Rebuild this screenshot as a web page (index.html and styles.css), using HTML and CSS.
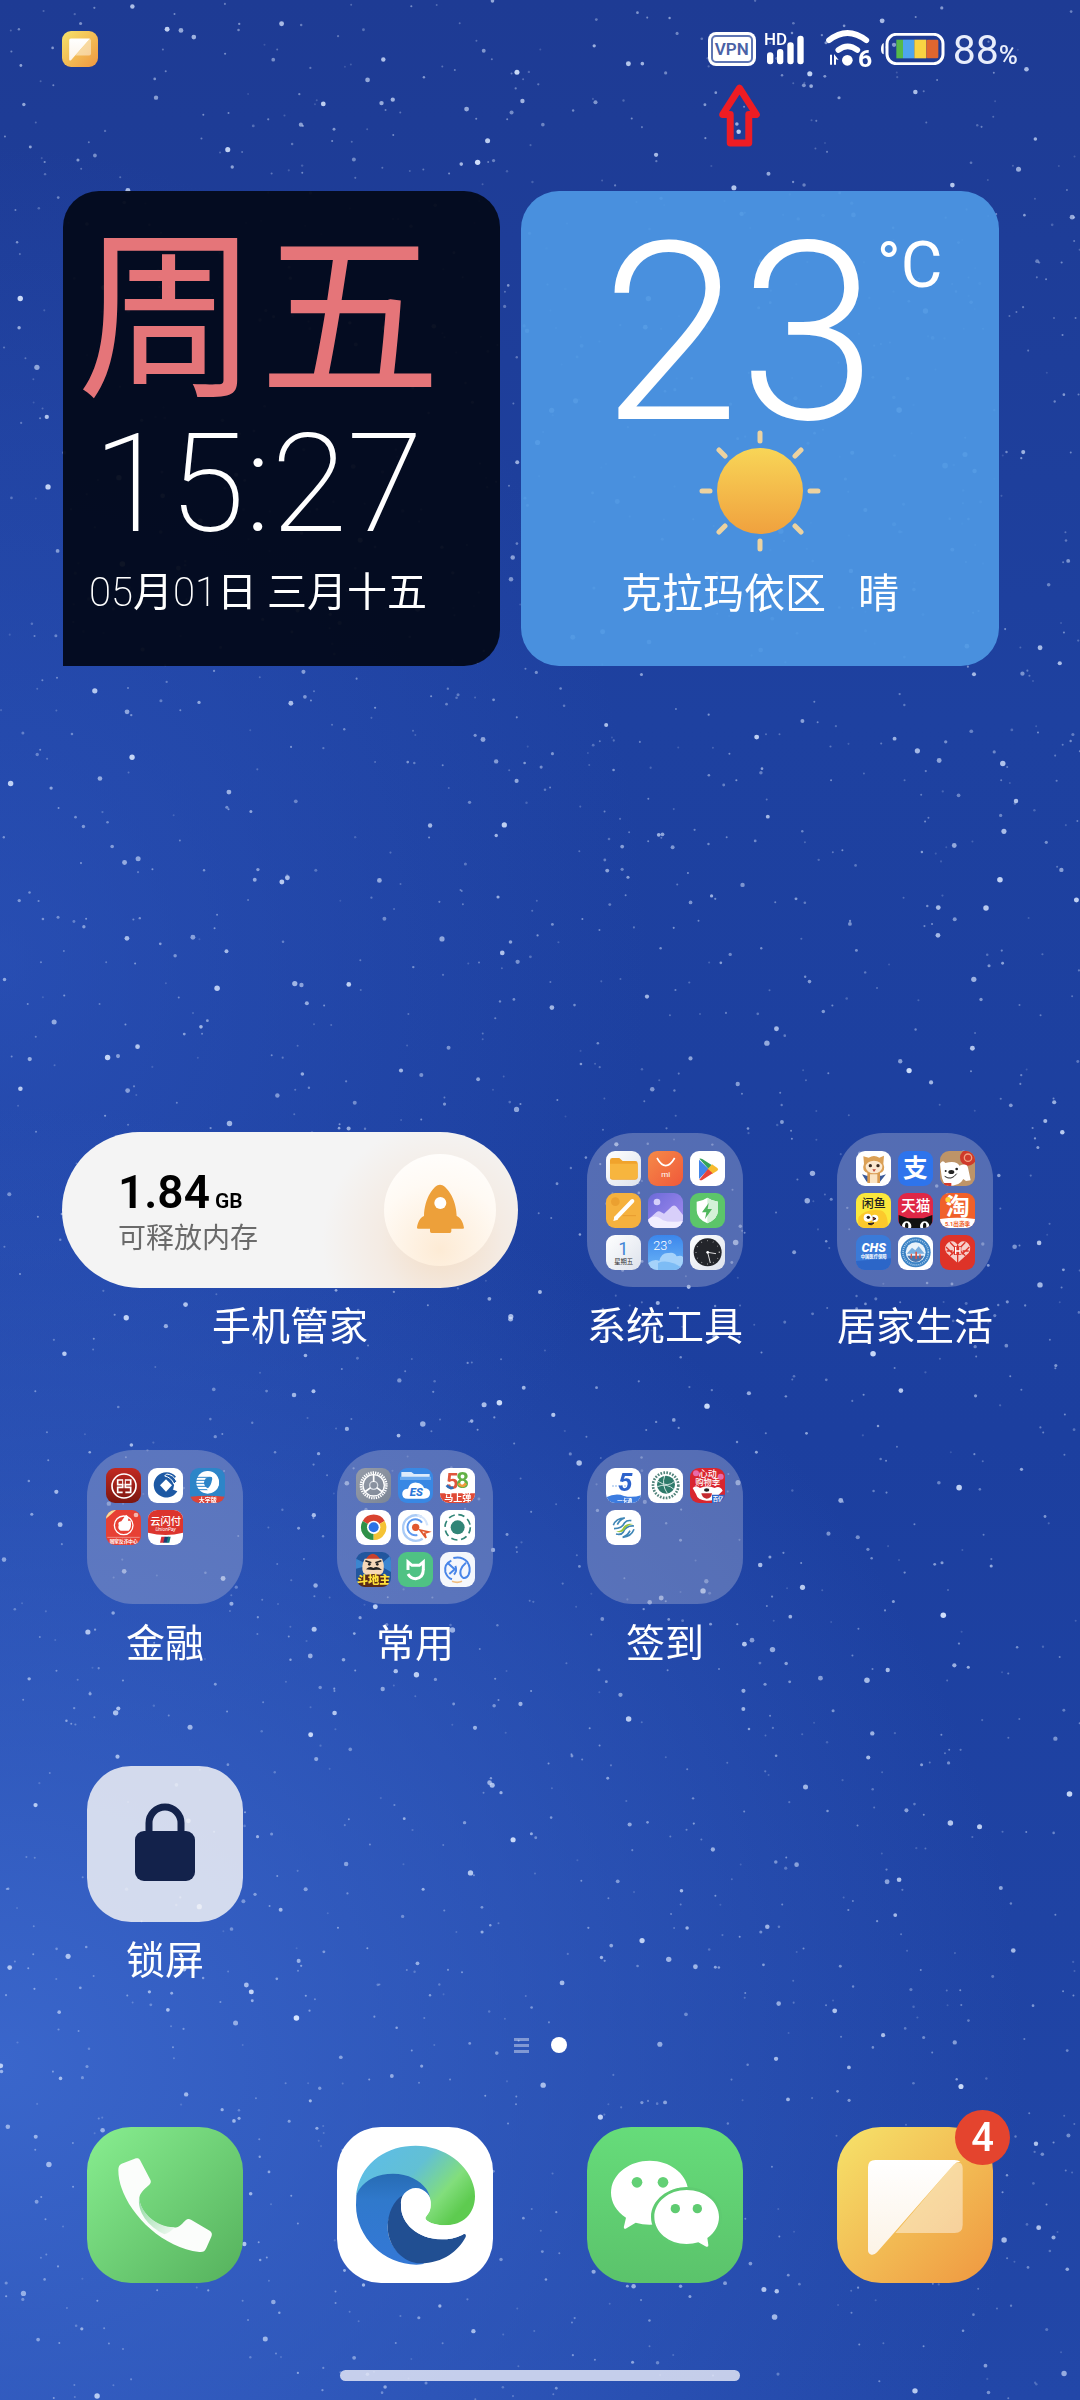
FILE: index.html
```html
<!DOCTYPE html>
<html lang="zh-CN">
<head>
    <meta charset="UTF-8">
    <meta name="viewport" content="width=device-width, initial-scale=1.0">
    <title>桌面</title>
    <link rel="stylesheet" href="styles.css">
    <script src="stars.js" defer></script>
</head>
<body>
    <svg class="defs" width="0" height="0" aria-hidden="true">
        <defs>
            <linearGradient id="gGreen" x1="0" y1="0" x2="1" y2="1"><stop offset="0" stop-color="#88ee90"/><stop offset="1" stop-color="#55b15c"/></linearGradient>
            <linearGradient id="gWechat" x1="0" y1="0" x2="0" y2="1"><stop offset="0" stop-color="#66dc7a"/><stop offset="1" stop-color="#5bc36b"/></linearGradient>
            <linearGradient id="gMsg" x1="0" y1="0" x2="1" y2="1"><stop offset="0" stop-color="#f6e36a"/><stop offset="1" stop-color="#ef9740"/></linearGradient>
            <linearGradient id="gPaper" x1="0" y1="0" x2="0" y2="1"><stop offset="0" stop-color="#ffffff"/><stop offset="1" stop-color="#fcf3e6"/></linearGradient>
            <linearGradient id="gSun" x1="0" y1="0" x2="0" y2="1"><stop offset="0" stop-color="#f8d557"/><stop offset="1" stop-color="#f0a13e"/></linearGradient>
            <linearGradient id="gEdgeTop" x1="0" y1="0" x2="1" y2=".6"><stop offset="0" stop-color="#5cbcec"/><stop offset=".5" stop-color="#62c0d4"/><stop offset=".8" stop-color="#82de7c"/><stop offset="1" stop-color="#5ecb50"/></linearGradient>
            <linearGradient id="gEdgeMid" x1="0" y1="0" x2="0" y2="1"><stop offset="0" stop-color="#276cb4"/><stop offset=".3" stop-color="#3079cc"/><stop offset="1" stop-color="#3478d6"/></linearGradient>
            <linearGradient id="gCrease" x1="0" y1="0" x2="1" y2="1"><stop offset="0" stop-color="#8ed9a0"/><stop offset="1" stop-color="#f2faf3"/></linearGradient>
            <linearGradient id="gPale" x1="0" y1="0" x2="1" y2="1"><stop offset="0" stop-color="#ffffff"/><stop offset="1" stop-color="#dde2ec"/></linearGradient>
            <linearGradient id="gOrange" x1="0" y1="0" x2="1" y2="1"><stop offset="0" stop-color="#f58a48"/><stop offset="1" stop-color="#f0583a"/></linearGradient>
            <linearGradient id="gPurple" x1="0" y1="0" x2="1" y2="1"><stop offset="0" stop-color="#6c6ad8"/><stop offset="1" stop-color="#a48cf0"/></linearGradient>
            <linearGradient id="gSky" x1="0" y1="0" x2="0" y2="1"><stop offset="0" stop-color="#3b86ec"/><stop offset="1" stop-color="#6bb5f7"/></linearGradient>
            <linearGradient id="gRed" x1="0" y1="0" x2="0" y2="1"><stop offset="0" stop-color="#c22920"/><stop offset="1" stop-color="#7c1610"/></linearGradient>
            <linearGradient id="gGray" x1="0" y1="0" x2="1" y2="1"><stop offset="0" stop-color="#969ca8"/><stop offset="1" stop-color="#7c8696"/></linearGradient>
            <symbol id="message" viewBox="0 0 468 468">
                <rect width="468" height="468" fill="url(#gMsg)"/>
                <path d="M175 318L352 110Q377 100 377 124V294Q377 318 353 318Z" fill="#fff" fill-opacity=".45"/>
                <path d="M93 121Q93 99 115 99H352Q364 99 370 104Q358 104 350 113L120 376Q112 385 103 383Q93 380 93 370Z" fill="url(#gPaper)"/>
            </symbol>
        </defs>
    </svg>

    <canvas class="stars" id="stars"></canvas>

    <div class="screen">
        <header class="status">
            <svg class="status-app"><use href="#message"/></svg>
            <div class="status-icons">
                <div class="vpn">
                    <span class="vpn-text">VPN</span>
                    <svg class="arrow" viewBox="0 0 124 190"><path d="M62 12L113 92H90V178H34V92H11Z" fill="none" stroke="#ee1c24" stroke-width="21" stroke-linejoin="round"/></svg>
                </div>
                <svg class="signal" viewBox="0 0 126 96">
                    <text x="0" y="36" font-size="51" font-weight="500" fill="#fff">HD</text>
                    <g fill="#fff"><rect x="9" y="58" width="19" height="36" rx="9"/><rect x="39" y="48" width="19" height="46" rx="9"/><rect x="70" y="28" width="19" height="66" rx="9"/><rect x="100" y="8" width="19" height="86" rx="9"/></g>
                </svg>
                <svg class="wifi" viewBox="0 0 141 114">
                    <g fill="none" stroke="#fff" stroke-width="17" stroke-linecap="round"><path d="M9 31Q64 -13 121 31"/><path d="M37 60Q65 38 94 60"/></g>
                    <circle cx="64" cy="91" r="16" fill="#fff"/>
                    <path d="M0 86L12 104V74H18V104H12M24 104V72L38 90L30 88V104Z" fill="#fff"/>
                    <text x="96" y="111" font-size="74" font-weight="700" fill="#fff">6</text>
                </svg>
                <svg class="battery" viewBox="0 0 192 96">
                    <path d="M8 30Q0 34 0 48Q0 62 8 64Z" fill="#fff"/>
                    <rect x="18" y="4" width="168" height="88" rx="28" fill="none" stroke="#fff" stroke-width="9"/>
                    <rect x="46" y="20" width="20" height="56" fill="#56b949"/><rect x="66" y="20" width="34" height="56" fill="#4ea5ee"/>
                    <rect x="100" y="20" width="36" height="56" fill="#f9d342"/><rect x="136" y="20" width="36" height="56" rx="4" fill="#e0662f"/>
                </svg>
                <span class="percent">88<small>%</small></span>
            </div>
        </header>

        <section class="widgets">
            <div class="clock">
                <div class="weekday">周五</div>
                <div class="time">15:27</div>
                <div class="date"><span class="num">05</span>月<span class="num">01</span>日 三月十五</div>
            </div>
            <div class="weather">
                <div class="temp">23<sup>°C</sup></div>
                <svg class="sun" viewBox="0 0 122 122">
                    <g stroke="#ecd2a0" stroke-width="5" stroke-linecap="round">
                        <path d="M61 3V11M61 111V119M3 61H11M111 61H119M20 20L26 26M96 96L102 102M20 102L26 96M96 26L102 20"/>
                    </g>
                    <circle cx="61" cy="61" r="43" fill="url(#gSun)"/>
                </svg>
                <div class="place"><span>克拉玛依区</span><span>晴</span></div>
            </div>
        </section>

        <main class="apps">
            <button class="app app-wide">
                <span class="manager">
                    <span class="memory">
                        <span class="memory-size">1.84<small>GB</small></span>
                        <span class="memory-text">可释放内存</span>
                    </span>
                    <svg class="rocket" viewBox="0 0 336 336">
                        <path d="M168 92C186 92 217 132 218 186C230 190 238 206 240 222Q240 224 236 224H202V232Q202 237 197 237H143Q138 237 138 232V224H103Q99 224 99 221C101 206 108 190 120 186C121 132 150 92 168 92Z" fill="#eda03a"/>
                        <circle cx="169" cy="147" r="18" fill="#fff"/>
                    </svg>
                </span>
                <span class="label">手机管家</span>
            </button>

            <button class="app">
                <span class="folder">
                    <svg viewBox="0 0 105 105"><rect width="105" height="105" fill="url(#gPale)"/><path d="M12 28Q12 21 19 21H40L50 30H88Q95 30 95 37V78Q95 86 87 86H20Q12 86 12 78Z" fill="#f0a32c"/><path d="M12 38H95V78Q95 84 87 84H20Q12 84 12 78Z" fill="#f7b53e"/></svg>
                    <svg viewBox="0 0 105 105"><rect width="105" height="105" fill="url(#gOrange)"/><path d="M27 21Q53 67 80 21" fill="none" stroke="#fff" stroke-width="5"/><text x="53" y="78" font-size="24" text-anchor="middle" fill="#fff">mi</text></svg>
                    <svg viewBox="0 0 105 105"><rect width="105" height="105" fill="#fff"/><path d="M27 26L56 54L27 84Z" fill="#4285e8"/><path d="M28 23Q32 21 38 25L66 43L56 54Z" fill="#35a35a"/><path d="M66 40L82 51Q87 55 82 59L66 69L53 54Z" fill="#f7bb2e"/><path d="M28 86L54 54L68 67L38 86Q32 89 28 86Z" fill="#e5443a"/></svg>
                    <svg viewBox="0 0 105 105"><rect width="105" height="105" fill="#f5b13e"/><circle cx="28" cy="26" r="13" fill="#eba030"/><path d="M50 68H90" stroke="#e89c30" stroke-width="3"/><path d="M30 75L79 24" stroke="#fff" stroke-width="12" stroke-linecap="round"/><path d="M22 84L26 70L36 80Z" fill="#fff"/></svg>
                    <svg viewBox="0 0 105 105"><rect width="105" height="105" fill="url(#gPurple)"/><circle cx="27" cy="27" r="10" fill="#d5d0fa"/><path d="M0 80L25 58Q32 52 40 58L48 62L72 40Q80 34 86 42L105 66V105H0Z" fill="#d8cffa"/><path d="M0 80Q20 60 45 82Q65 90 105 84V105H0Z" fill="#f2eeff"/></svg>
                    <svg viewBox="0 0 105 105"><rect width="105" height="105" fill="#5cc56a"/><path d="M52 14Q66 24 84 26V52Q84 78 52 91Q20 78 20 52V26Q38 24 52 14Z" fill="#fff"/><path d="M52 14Q66 24 84 26V52Q84 78 52 91Z" fill="#d4f1d8"/><path d="M56 30L36 58H49L45 78L66 48H53Z" fill="#4eb65c"/></svg>
                    <svg viewBox="0 0 105 105"><rect width="105" height="105" fill="url(#gPale)"/><text x="52" y="60" font-size="54" text-anchor="middle" fill="#4285d6">1</text><text x="53" y="86" font-size="19" text-anchor="middle" fill="#333">星期五</text></svg>
                    <svg viewBox="0 0 105 105"><rect width="105" height="105" fill="url(#gSky)"/><path d="M0 84Q20 70 34 78Q40 52 62 54Q80 50 86 64Q100 60 105 66V105H0Z" fill="#a5d2fa"/><path d="M30 84Q60 70 105 100V105H30Z" fill="#7dbcf5"/><text x="16" y="46" font-size="38" font-weight="300" fill="#fff">23°</text></svg>
                    <svg viewBox="0 0 105 105"><rect width="105" height="105" fill="url(#gPale)"/><circle cx="53" cy="52" r="42" fill="#23252a"/><circle cx="53" cy="52" r="35" fill="none" stroke="#aaa" stroke-width="4" stroke-dasharray="2 16"/><path d="M53 52L78 56M53 52L61 84" stroke="#ddd" stroke-width="3"/><circle cx="53" cy="52" r="4" fill="#fff"/></svg>
                </span>
                <span class="label">系统工具</span>
            </button>

            <button class="app">
                <span class="folder">
                    <svg viewBox="0 0 105 105"><rect width="105" height="105" fill="#fff"/><path d="M18 70L32 92H72L90 70L76 74H32Z" fill="#3b5b9a"/><path d="M34 64H72V96H34Z" fill="#d89a50"/><path d="M42 70H64V96H42Z" fill="#fae3c2"/><path d="M22 16L38 20Q54 10 70 20L84 14L82 38Q92 62 68 68H40Q14 62 24 38Z" fill="#dba055"/><ellipse cx="54" cy="48" rx="25" ry="19" fill="#fbe8cf"/><circle cx="43" cy="44" r="5" fill="#3a2a20"/><circle cx="66" cy="44" r="5" fill="#3a2a20"/><path d="M49 55H60L54 63Z" fill="#c54a3a"/></svg>
                    <svg viewBox="0 0 105 105"><rect width="105" height="105" fill="#2e74ec"/><text x="52" y="78" font-size="74" font-weight="700" text-anchor="middle" fill="#fff">支</text></svg>
                    <svg viewBox="0 0 105 105"><rect width="105" height="105" fill="#bd9468"/><circle cx="84" cy="20" r="24" fill="#cf3a2a"/><circle cx="84" cy="20" r="11" fill="none" stroke="#f0a080" stroke-width="4"/><path d="M0 38Q8 24 16 36Q50 28 58 44Q80 34 84 50L92 88L78 90L70 84Q60 105 24 105Q6 96 4 70Z" fill="#fff"/><ellipse cx="34" cy="63" rx="9" ry="6" fill="#222"/><circle cx="17" cy="60" r="3" fill="#222"/><circle cx="50" cy="54" r="4" fill="#222"/><path d="M14 76Q34 90 50 68" fill="none" stroke="#222" stroke-width="3"/><path d="M12 96H34V105H12Z" fill="#d33a2c"/></svg>
                    <svg viewBox="0 0 105 105"><rect width="105" height="105" fill="#fbe83c"/><text x="53" y="44" font-size="36" font-weight="500" text-anchor="middle" fill="#222">闲鱼</text><path d="M8 72Q30 46 72 52Q96 56 96 105H14Q2 92 8 72Z" fill="#fcc92c"/><circle cx="35" cy="74" r="12" fill="#fff"/><circle cx="56" cy="76" r="11" fill="#fff"/><circle cx="37" cy="73" r="5" fill="#222"/><path d="M50 72L60 77L50 82M36 92Q46 100 54 90Z" fill="#a3301c" stroke="#222" stroke-width="3"/></svg>
                    <svg viewBox="0 0 105 105"><rect width="105" height="105" fill="#df2746"/><text x="53" y="53" font-size="44" font-weight="500" text-anchor="middle" fill="#fff">天猫</text><path d="M2 66L30 76H76L103 66V105H2Z" fill="#111"/><circle cx="26" cy="99" r="14" fill="#fff"/><circle cx="80" cy="99" r="14" fill="#fff"/><ellipse cx="26" cy="99" rx="5" ry="10" fill="#111"/><ellipse cx="80" cy="99" rx="5" ry="10" fill="#111"/></svg>
                    <svg viewBox="0 0 105 105"><rect width="105" height="105" fill="#f0602a"/><text x="53" y="66" font-size="72" font-weight="700" text-anchor="middle" fill="#fff">淘</text><circle cx="24" cy="20" r="8" fill="#ffd23c"/><path d="M0 78Q52 70 105 78V105H0Z" fill="#fff"/><text x="53" y="98" font-size="17" font-weight="700" text-anchor="middle" fill="#f0602a">5.1出游季</text></svg>
                    <svg viewBox="0 0 105 105"><rect width="105" height="105" fill="#3a7ad8"/><path d="M0 78L105 70V105H0Z" fill="#2c66c8"/><text x="53" y="52" font-size="38" font-weight="900" font-style="italic" text-anchor="middle" fill="#fff">CHS</text><text x="53" y="70" font-size="13" font-weight="700" text-anchor="middle" fill="#fff">中国医疗保障</text></svg>
                    <svg viewBox="0 0 105 105"><rect width="105" height="105" fill="#fff"/><circle cx="53" cy="52" r="45" fill="#3b82c4"/><circle cx="53" cy="52" r="38" fill="none" stroke="#a8cdec" stroke-width="5" stroke-dasharray="3 3"/><circle cx="53" cy="52" r="30" fill="#e9f3fb"/><path d="M26 56L42 38L52 46L62 34L80 56Z" fill="#79aede"/><path d="M28 62H78Q70 80 53 81Q36 80 28 62Z" fill="#4a76ad"/><path d="M38 56H42V70H38ZM52 50H57V72H52ZM64 58H68V70H64Z" fill="#d8584a"/></svg>
                    <svg viewBox="0 0 105 105"><rect width="105" height="105" fill="#de3328"/><path d="M53 84L20 54Q8 34 26 22Q42 12 53 30Q64 12 80 22Q98 34 86 54Z" fill="#f6cfca"/><path d="M18 36L40 58M30 22L53 46L76 22M88 36L66 58M30 62L53 40L76 62M53 84V30M20 48H38M68 48H86" fill="none" stroke="#de3328" stroke-width="4"/><path d="M42 34H64V60H42Z" fill="#de3328"/><path d="M47 36V58M60 36V58M47 48H60" stroke="#fff" stroke-width="4"/></svg>
                </span>
                <span class="label">居家生活</span>
            </button>

            <button class="app">
                <span class="folder">
                    <svg viewBox="0 0 105 105"><rect width="105" height="105" fill="url(#gRed)"/><circle cx="54" cy="54" r="36" fill="none" stroke="#fff" stroke-width="5"/><path d="M50 36H35V50H50V58H35V73H50M58 36H74V50H58V58H74V73H58" fill="none" stroke="#fff" stroke-width="5"/><path d="M50 34V52M58 34V52" stroke="#fff" stroke-width="3"/></svg>
                    <svg viewBox="0 0 105 105"><rect width="105" height="105" fill="#fff"/><path d="M84 26A38 38 0 1 0 88 70L72 64A22 22 0 1 1 70 38Z" fill="#1d59a4"/><circle cx="52" cy="52" r="26" fill="#1d59a4"/><path d="M54 34L72 52L54 71L36 52Z" fill="#fff"/><path d="M56 18Q76 20 86 40L78 48Q70 28 50 24Z" fill="#1d59a4" stroke="#fff" stroke-width="3"/></svg>
                    <svg viewBox="0 0 105 105"><rect width="105" height="105" fill="#2d85c8"/><circle cx="53" cy="43" r="34" fill="#fff"/><circle cx="60" cy="44" r="18" fill="#2d85c8"/><path d="M18 28H58M14 37H54M14 46H52M16 55H54M24 65H58" stroke="#2d85c8" stroke-width="3"/><path d="M50 18Q74 20 64 44Q60 58 50 62L60 76Q90 66 87 40Q80 10 50 10Z" fill="#fff"/><path d="M0 86Q53 80 105 86V105H0Z" fill="#dc4338"/><text x="53" y="101" font-size="18" font-weight="700" text-anchor="middle" fill="#fff">大字版</text></svg>
                    <svg viewBox="0 0 105 105"><rect width="105" height="105" fill="#e74034"/><path d="M0 26L30 0H0Z" fill="#f6dc9a"/><circle cx="53" cy="46" r="28" fill="none" stroke="#fff" stroke-width="4"/><path d="M38 46Q34 36 46 34L60 14Q70 18 66 32H74Q78 52 68 62H44Q34 58 38 46Z" fill="#fff"/><circle cx="90" cy="15" r="7" fill="#f5b5ae"/><path d="M4 82H101" stroke="#f5b5ae" stroke-width="2"/><text x="53" y="99" font-size="14" font-weight="700" text-anchor="middle" fill="#fff">国家反诈中心</text></svg>
                    <svg viewBox="0 0 105 105"><rect width="105" height="105" fill="#fff"/><path d="M0 0H105V68Q53 82 0 68Z" fill="#dc352e"/><text x="53" y="44" font-size="31" font-weight="500" text-anchor="middle" fill="#fff">云闪付</text><text x="53" y="63" font-size="15" font-style="italic" text-anchor="middle" fill="#fff">UnionPay</text><path d="M40 80H52L48 98H36Z" fill="#d4313a"/><path d="M50 80H62L58 98H46Z" fill="#1c3c74"/><path d="M60 80H68L64 98H56Z" fill="#157a7c"/></svg>
                </span>
                <span class="label">金融</span>
            </button>

            <button class="app">
                <span class="folder">
                    <svg viewBox="0 0 105 105"><rect width="105" height="105" fill="url(#gGray)"/><circle cx="53" cy="52" r="38" fill="none" stroke="#fff" stroke-width="8" stroke-dasharray="4 3"/><circle cx="53" cy="52" r="32" fill="none" stroke="#fff" stroke-width="4"/><circle cx="53" cy="52" r="12" fill="none" stroke="#d5d9e0" stroke-width="4"/><path d="M53 20V42M62 59L80 72M44 59L26 72" stroke="#fff" stroke-width="5"/></svg>
                    <svg viewBox="0 0 105 105"><rect width="105" height="105" fill="#3888e4"/><path d="M10 12H40L48 18H95V34H10Z" fill="#dcebfb"/><path d="M6 26H99V36H6Z" fill="#69aaf0"/><path d="M30 92Q10 92 13 74Q16 62 30 62Q36 42 56 44Q74 46 78 60Q98 62 96 78Q94 92 78 92Z" fill="#fff"/><text x="55" y="84" font-size="34" font-weight="900" font-style="italic" text-anchor="middle" fill="#2d78d8">ES</text></svg>
                    <svg viewBox="0 0 105 105"><rect width="105" height="105" fill="#fff"/><text x="18" y="64" font-size="66" font-weight="700" fill="#e0563c">5</text><text x="48" y="60" font-size="68" font-weight="700" fill="#62b145">8</text><path d="M20 52Q28 64 40 58" fill="none" stroke="#2f6fb8" stroke-width="8"/><path d="M56 46Q66 62 78 46" fill="none" stroke="#f09a3c" stroke-width="8"/><path d="M0 76H105V105H0Z" fill="#e04a36"/><text x="53" y="98" font-size="27" font-weight="700" text-anchor="middle" fill="#fff">马上弹</text></svg>
                    <svg viewBox="0 0 105 105"><rect width="105" height="105" fill="#fff"/><path d="M53 52L20 33A38 38 0 0 1 86 33Z" fill="#d9432f"/><path d="M53 52L20 33A38 38 0 0 0 53 90Z" fill="#2f9148"/><path d="M53 52L86 33A38 38 0 0 1 53 90Z" fill="#f5c334"/><circle cx="53" cy="52" r="20" fill="#fff"/><circle cx="53" cy="52" r="15" fill="#2c72e6"/></svg>
                    <svg viewBox="0 0 105 105"><rect width="105" height="105" fill="#fff"/><path d="M70 20A38 38 0 1 0 74 86" fill="none" stroke="#aacbf6" stroke-width="7"/><path d="M88 46A36 36 0 0 0 58 16" fill="none" stroke="#d5e5fb" stroke-width="7"/><path d="M72 38A24 24 0 1 0 58 75" fill="none" stroke="#5f9af0" stroke-width="6"/><circle cx="53" cy="52" r="11" fill="#e2582e"/><path d="M66 60L92 66L80 70L84 84Z" fill="none" stroke="#e2582e" stroke-width="5"/></svg>
                    <svg viewBox="0 0 105 105"><rect width="105" height="105" fill="#fff"/><circle cx="53" cy="52" r="21" fill="#318577"/><circle cx="53" cy="52" r="38" fill="none" stroke="#318577" stroke-width="5" stroke-dasharray="19 11"/></svg>
                    <svg viewBox="0 0 105 105"><rect width="105" height="105" fill="#21569e"/><path d="M0 20L40 40L0 50ZM105 10L70 40L105 60Z" fill="#3b86d0"/><path d="M28 24Q50 -14 74 24Z" fill="#c8402c"/><path d="M26 20H78Q88 44 80 62Q52 88 22 62Q14 44 26 20Z" fill="#f6d8b8"/><path d="M28 26L46 32M76 26L58 32" stroke="#222" stroke-width="5"/><circle cx="40" cy="37" r="4" fill="#222"/><circle cx="64" cy="37" r="4" fill="#222"/><path d="M30 52Q42 40 52 48Q64 40 78 54Q62 52 52 54Q42 54 30 52Z" fill="#222"/><path d="M8 76Q50 56 97 76V105H8Z" fill="#5a2a18"/><text x="53" y="97" font-size="34" font-weight="900" text-anchor="middle" fill="#ffe23c">斗地主</text></svg>
                    <svg viewBox="0 0 105 105"><rect width="105" height="105" fill="#4fc284"/><path d="M30 54V30L42 40H64L76 30V54" fill="none" stroke="#fff" stroke-width="9"/><path d="M30 66Q38 80 53 80Q76 78 76 52" fill="none" stroke="#fff" stroke-width="9"/></svg>
                    <svg viewBox="0 0 105 105"><rect width="105" height="105" fill="#f5f7fc"/><g fill="none" stroke="#4a86e8" stroke-width="6"><path d="M34 26Q12 36 16 60Q22 78 36 82"/><path d="M24 34L44 52L28 66"/><path d="M40 18Q66 12 82 30Q94 48 86 68Q80 80 70 78Q58 70 62 54Q66 42 78 32"/><path d="M42 68Q52 56 46 42"/></g><path d="M36 88Q52 94 66 88" fill="none" stroke="#f0bd80" stroke-width="5"/></svg>
                </span>
                <span class="label">常用</span>
            </button>

            <button class="app">
                <span class="folder">
                    <svg viewBox="0 0 105 105"><rect width="105" height="105" fill="#fff"/><path d="M18 54H66" stroke="#8db5ea" stroke-width="3" stroke-dasharray="6 3"/><text x="58" y="70" font-size="78" font-weight="700" font-style="italic" text-anchor="middle" fill="#2d63cc">5</text><path d="M0 88Q30 74 54 84Q80 90 105 82V105H0Z" fill="#3c7ce0"/><text x="56" y="101" font-size="15" font-weight="700" text-anchor="middle" fill="#fff">一卡通</text></svg>
                    <svg viewBox="0 0 105 105"><rect width="105" height="105" fill="#fff"/><circle cx="53" cy="52" r="38" fill="none" stroke="#50837a" stroke-width="8" stroke-dasharray="5 4"/><circle cx="54" cy="50" r="27" fill="#2d7a6a"/><path d="M30 40Q60 60 80 40M28 56Q56 44 78 64M50 24Q40 50 58 76" fill="none" stroke="#cfe4de" stroke-width="3"/></svg>
                    <svg viewBox="0 0 105 105"><rect width="105" height="105" fill="#d9252f"/><circle cx="18" cy="16" r="9" fill="#e86aa8"/><circle cx="92" cy="26" r="9" fill="#e86aa8"/><text x="53" y="27" font-size="27" font-weight="500" text-anchor="middle" fill="#fff">心动</text><text x="53" y="50" font-size="25" font-weight="500" text-anchor="middle" fill="#fff">购物季</text><path d="M8 60Q18 50 30 60Q52 50 74 60Q90 52 98 68L86 80Q80 98 50 98Q22 96 18 78Z" fill="#fff"/><ellipse cx="50" cy="66" rx="8" ry="5" fill="#222"/><path d="M34 76H66Q64 92 50 92Q36 90 34 76Z" fill="#c52a30"/><path d="M66 80H105V105H66Z" fill="#2f66c8"/><text x="84" y="99" font-size="16" font-weight="700" text-anchor="middle" fill="#fff">百亿</text></svg>
                    <svg viewBox="0 0 105 105"><rect width="105" height="105" fill="#fff"/><g fill="none" stroke-width="5" stroke="#3f86b6"><path d="M22 46Q30 24 56 24Q40 30 34 44"/><path d="M24 56Q48 56 56 38Q62 30 76 32"/><path d="M84 58Q76 80 50 82Q66 76 72 62"/><path d="M84 48Q60 46 52 66Q46 76 30 72"/></g><path d="M28 64Q46 66 52 52Q60 38 82 42Q62 46 56 58Q48 72 28 64Z" fill="#9ac43c"/></svg>
                </span>
                <span class="label">签到</span>
            </button>

            <button class="app app-first">
                <span class="lock">
                    <svg viewBox="0 0 156 156">
                        <path d="M62 68V57A16 16 0 0 1 94 57V68" fill="none" stroke="#13224b" stroke-width="7"/>
                        <rect x="48" y="65" width="60" height="50" rx="9" fill="#13224b"/>
                    </svg>
                </span>
                <span class="label">锁屏</span>
            </button>
        </main>

        <nav class="pager">
            <span class="pager-lines"></span>
            <span class="pager-dot"></span>
        </nav>

        <footer class="dock">
            <button class="dock-app" aria-label="电话">
                <svg viewBox="0 0 468 468">
                    <rect width="468" height="468" fill="url(#gGreen)"/>
                    <path d="M94 130C94 119 97 113 104 110L143 95C152 92 156 94 159 99L190 158C193 165 191 168 187 173C168 190 157 200 157 216C160 255 205 302 262 302C274 302 280 296 296 280C301 275 306 275 312 278L368 311C375 316 376 321 373 329L358 363C354 373 348 376 337 375C210 360 94 230 94 130Z" fill="#fbfdfb"/>
                    <path d="M157 208C155 250 205 303 264 301C250 314 245 318 232 322C185 300 148 255 157 208Z" fill="url(#gCrease)"/>
                </svg>
            </button>
            <button class="dock-app" aria-label="浏览器">
                <svg viewBox="0 0 468 468">
                    <rect width="468" height="468" fill="#fff"/>
                    <path d="M57 205C68 110 145 56 236 56C330 56 414 125 414 208C414 262 375 296 325 295C295 295 266 285 265 273C266 266 281 258 281 233C281 180 225 150 165 150C110 150 70 180 57 205Z" fill="url(#gEdgeTop)"/>
                    <path d="M58 205C72 165 115 140 168 140C228 140 272 175 279 212C268 195 255 191 236 191C205 191 155 240 152 300C152 360 200 405 262 409C258 412 250 413 238 413C140 413 57 330 57 235Z" fill="url(#gEdgeMid)"/>
                    <path d="M197 205C170 220 152 260 152 300C152 360 200 409 250 409C320 409 365 370 386 330C389 321 382 319 377 323C355 334 335 337 315 337C240 337 192 285 192 240C192 225 194 215 197 205Z" fill="#214f92"/>
                    <path d="M281 235A45 45 0 1 0 192 235C192 290 240 337 315 337C335 337 355 334 377 323L386 290L325 295C295 295 266 285 265 273C270 262 281 258 281 235Z" fill="#fff"/>
                </svg>
            </button>
            <button class="dock-app" aria-label="微信">
                <svg viewBox="0 0 468 468">
                    <rect width="468" height="468" fill="url(#gWechat)"/>
                    <path d="M188 101C252 101 304 144 304 197C304 250 252 293 188 293Q166 293 146 287L116 305Q109 307 111 298L117 272C88 253 72 226 72 197C72 144 124 101 188 101Z" fill="#fff"/>
                    <circle cx="150" cy="166" r="16" fill="#62d075"/><circle cx="228" cy="166" r="16" fill="#62d075"/>
                    <path d="M299 180C245 180 192 218 192 270C192 322 245 360 299 360Q320 360 335 353L362 369L371 330Q405 305 405 270C405 218 353 180 299 180Z" fill="#5fcb71"/>
                    <path d="M299 189C245 189 202 225 202 270C202 315 245 351 299 351Q318 351 334 346L358 359Q365 361 364 354L361 333C383 318 396 295 396 270C396 225 353 189 299 189Z" fill="#fff"/>
                    <circle cx="265" cy="245" r="14" fill="#5fcb71"/><circle cx="331" cy="245" r="14" fill="#5fcb71"/>
                </svg>
            </button>
            <button class="dock-app" aria-label="短信">
                <svg><use href="#message"/></svg>
                <span class="badge">4</span>
            </button>
        </footer>

        <div class="home-bar"></div>
    </div>
</body>
</html>
```
FILE: styles.css
```css
* {
    box-sizing: border-box;
}

body {
    margin: 0;
    position: relative;
    font-family: Roboto, 'Noto Sans CJK SC', sans-serif;
    color: #fff;
    background:
        radial-gradient(ellipse 95% 40% at 0% 86%, #3a66cb, rgba(58, 102, 203, 0)),
        radial-gradient(ellipse 60% 34% at 0% 40%, rgba(46, 86, 190, .6), rgba(46, 86, 190, 0)),
        linear-gradient(to bottom, #1e3b94, #1e41a0 30%, #1c3f9f 60%, #2247a8);
}

button {
    padding: 0;
    border: none;
    background: none;
    color: inherit;
    font-family: inherit;
    cursor: pointer;
}

svg {
    display: block;
}

.defs,
.stars {
    position: absolute;
    top: 0;
    left: 0;
}

.screen {
    position: relative;
    display: flex;
    flex-direction: column;
    min-height: 100vh;
}

/* status bar */
.status {
    display: flex;
    justify-content: space-between;
    align-items: center;
    height: 98px;
    padding: 0 62px;
}

.status-app {
    width: 36px;
    height: 36px;
    border-radius: 9px;
}

.status-icons {
    display: flex;
    align-items: center;
    gap: 8px;
}

.vpn {
    position: relative;
    width: 48px;
    height: 34px;
    padding: 3px;
    border-radius: 8px;
    background: #fff;
}

.vpn-text {
    display: block;
    height: 28px;
    border: 2px solid #5f76b4;
    border-radius: 5px;
    font-size: 17px;
    font-weight: 600;
    line-height: 24px;
    text-align: center;
    color: #4a62a6;
}

.arrow {
    position: absolute;
    top: 52px;
    left: 11px;
    width: 41px;
    height: 63px;
}

.signal {
    width: 42px;
    height: 32px;
}

.wifi {
    width: 47px;
    height: 38px;
    margin-left: 12px;
}

.battery {
    width: 64px;
    height: 32px;
}

.percent {
    padding-top: 6px;
    font-size: 41px;
    line-height: 40px;
    color: #e8edfb;
}

.percent small {
    font-size: 26px;
    font-weight: 500;
}

/* clock and weather */
.widgets {
    display: grid;
    grid-template-columns: 437fr 478fr;
    gap: 21px;
    padding: 93px 81px 0 63px;
}

.clock,
.weather {
    height: 475px;
}

.clock {
    padding: 29px 0 0 14px;
    border-radius: 36px 36px 36px 0;
    background: rgba(3, 9, 26, .95);
}

.weekday {
    font-size: 182px;
    line-height: 200px;
    color: #e57579;
}

.time {
    padding-left: 16px;
    font-size: 138px;
    font-weight: 200;
    line-height: 128px;
}

.date {
    padding-left: 12px;
    font-size: 40px;
    line-height: 90px;
}

.num {
    font-weight: 200;
}

.weather {
    display: flex;
    flex-direction: column;
    align-items: center;
    border-radius: 38px;
    background: rgba(76, 151, 227, .93);
}

.temp {
    display: flex;
    align-items: flex-start;
    height: 239px;
    padding: 24px 0 0 24px;
    font-size: 248px;
    font-weight: 300;
    line-height: 240px;
}

.temp sup {
    padding-top: 16px;
    font-size: 64px;
    font-weight: 400;
    line-height: 70px;
}

.sun {
    width: 122px;
    height: 122px;
}

.place {
    display: flex;
    gap: 32px;
    font-size: 41px;
    line-height: 84px;
}

/* app grid */
.apps {
    display: grid;
    grid-template-columns: repeat(4, 1fr);
    row-gap: 94px;
    margin-top: auto;
    padding: 40px 40px 0;
}

.app {
    display: flex;
    flex-direction: column;
    align-items: center;
}

.app-wide {
    grid-column: span 2;
}

.app-first {
    grid-column: 1;
}

.label {
    margin-top: 11px;
    font-size: 39px;
    line-height: 56px;
}

.folder {
    display: grid;
    grid-template-columns: repeat(3, 35px);
    grid-auto-rows: 35px;
    gap: 7px;
    width: 156px;
    height: 154px;
    margin: 1px;
    padding: 18px 18px 17px 19px;
    border-radius: 46px;
    background: rgba(152, 164, 204, .45);
}

.folder svg {
    width: 35px;
    height: 35px;
    border-radius: 9px;
}

.manager {
    display: flex;
    justify-content: space-between;
    align-items: center;
    width: 456px;
    height: 156px;
    padding: 0 22px 0 56px;
    border-radius: 78px;
    background: radial-gradient(circle at 380px 110px, #f3dcc4, #f4ebe3 60px, #f4f4f4 120px);
}

.memory {
    display: flex;
    flex-direction: column;
    align-items: flex-start;
    padding-top: 12px;
}

.memory-size {
    font-size: 46px;
    font-weight: 600;
    line-height: 36px;
    color: #000;
}

.memory-size small {
    margin-left: 5px;
    font-size: 21px;
}

.memory-text {
    font-size: 28px;
    line-height: 40px;
    color: #6a6a6a;
}

.rocket {
    width: 112px;
    height: 112px;
    border-radius: 50%;
    background: radial-gradient(circle at 50% 85%, #fdebd5, #fffaf4 60%, #fff);
}

.lock {
    width: 156px;
    height: 156px;
    border-radius: 44px;
    background: rgba(240, 241, 246, .85);
}

/* page indicator */
.pager {
    display: flex;
    justify-content: center;
    align-items: center;
    gap: 22px;
    margin-top: 48px;
}

.pager-lines {
    width: 15px;
    height: 15px;
    background: repeating-linear-gradient(to bottom, rgba(255, 255, 255, .4) 0 3px, transparent 3px 6px);
}

.pager-dot {
    width: 16px;
    height: 16px;
    border-radius: 50%;
    background: #fff;
}

/* dock */
.dock {
    display: grid;
    grid-template-columns: repeat(4, 1fr);
    justify-items: center;
    margin-top: 74px;
    padding: 0 40px;
}

.dock-app {
    position: relative;
    width: 156px;
    height: 156px;
}

.dock-app svg {
    width: 156px;
    height: 156px;
    border-radius: 44px;
}

.badge {
    position: absolute;
    top: -17px;
    right: -17px;
    width: 55px;
    height: 55px;
    border-radius: 50%;
    background: #e4442e;
    font-size: 40px;
    font-weight: 500;
    line-height: 56px;
    text-align: center;
}

.home-bar {
    width: 37%;
    height: 11px;
    margin: 87px auto 19px;
    border-radius: 6px;
    background: rgba(225, 228, 245, .85);
}
```
FILE: stars.js
```js
// night sky: the same seed gives the same stars on every load
let seed = 2023;

function random() {
    seed = (seed * 16807) % 2147483647;
    return seed / 2147483647;
}

function drawStars() {
    const canvas = document.getElementById("stars");
    canvas.width = document.documentElement.clientWidth;
    canvas.height = document.body.offsetHeight;

    const ctx = canvas.getContext("2d");
    const count = canvas.width * canvas.height / 1100;

    for (let i = 0; i < count; i++) {
        const x = random() * canvas.width;
        const y = random() * canvas.height;
        const size = Math.pow(random(), 4);

        ctx.globalAlpha = 0.15 + size * 0.5 + random() * 0.35;
        ctx.fillStyle = "#d8e6ff";
        ctx.beginPath();
        ctx.arc(x, y, 1 + size * 1.8, 0, Math.PI * 2);
        ctx.fill();
    }
}

drawStars();
```
